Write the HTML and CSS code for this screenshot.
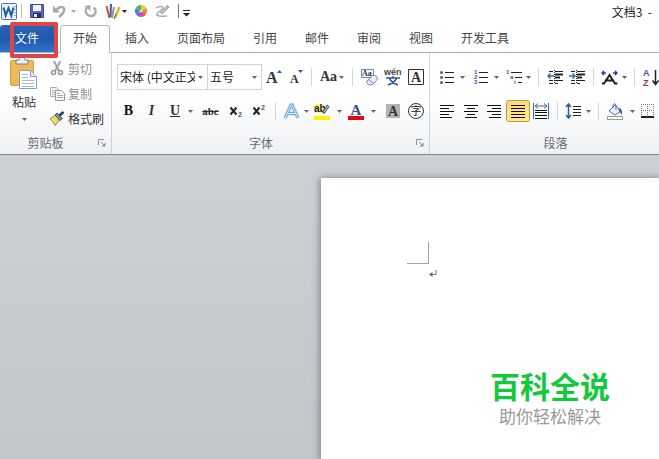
FILE: index.html
```html
<!DOCTYPE html>
<html lang="zh-CN">
<head>
<meta charset="utf-8">
<title>文档3</title>
<link rel="stylesheet" href="styles.css">
</head>
<body>
<svg class="defs" width="0" height="0" aria-hidden="true">
  <symbol id="caret" viewBox="0 0 5 3"><path d="M0 0h5L2.500 3z" fill="currentColor"/></symbol>
  <symbol id="launch" viewBox="0 0 8 8"><path d="M.5 6V.5H6" fill="none" stroke="#8b93a0"/><path d="M3 3l3 3" stroke="#8b93a0"/><path d="M7.500 3.500v4h-4z" fill="#8b93a0"/></symbol>
</svg>

<header class="titlebar">
  <div class="quick">
    <svg class="app" width="17" height="17" viewBox="0 0 17 17"><rect x=".5" y=".5" width="15" height="16" rx="1" fill="#e9f2fb" stroke="#4a78b4"/><path d="M13 3.500h2M13 6.500h2M13 9.500h2M13 12.500h2" stroke="#8eb0d8"/><path d="M2.500 4.500l2.200 8L7.500 5l2.800 7.500 2.200-8" fill="none" stroke="#1d57a5" stroke-width="2"/></svg>
    <i class="bar"></i>
    <button class="q save" aria-label="保存"><svg width="15" height="14" viewBox="0 0 15 14"><path d="M.5.5h13v13H.5z" fill="#5a66c4" stroke="#3d479f"/><path d="M3 1h8v6H3z" fill="#f3f6ff"/><path d="M3 9h8v5H3z" fill="#262d68"/><path d="M4 10h3v3H4z" fill="#e7eaff"/></svg></button>
    <button class="q undo" aria-label="撤消"><svg width="13" height="14" viewBox="0 0 13 14"><path d="M3 6C8 1 12 3 11 7q-1 3-5 6" fill="none" stroke="#a5a8ac" stroke-width="2.400"/><path d="M0 1.500V8.500h7z" fill="#a5a8ac"/></svg><svg class="caret pale"><use href="#caret"/></svg></button>
    <button class="q redo" aria-label="重复"><svg width="13" height="14" viewBox="0 0 13 14"><path d="M3 3.500c-3 4 0 8.500 4 8.500 5 0 6-6 2.500-8.500" fill="none" stroke="#aaacae" stroke-width="2.400"/><path d="M6.500 1v6l-6-5z" fill="#aaacae"/></svg></button>
    <button class="q pens" aria-label="笔"><svg width="16" height="17" viewBox="0 0 16 17"><path d="M1.500 3l3 12" stroke="#d64b39" stroke-width="2"/><path d="M6 1l-.5 13" stroke="#3f5f93" stroke-width="2"/><path d="M9 4l-2 11" stroke="#8b989d" stroke-width="2"/><path d="M14.500 4L10 15" stroke="#ddb932" stroke-width="2.500"/><path d="M11 11l-2 5" stroke="#796038"/></svg><svg class="caret"><use href="#caret"/></svg></button>
    <button class="q" aria-label="颜色"><svg width="12" height="12" viewBox="0 0 12 12"><path d="M6 6V0a6 6 0 0 1 5.200 3z" fill="#eacb2b"/><path d="M6 6l5.200-3a6 6 0 0 1 0 6z" fill="#ed8b38"/><path d="M6 6l5.200 3A6 6 0 0 1 6 12z" fill="#e64b81"/><path d="M6 6v6A6 6 0 0 1 .8 9z" fill="#995ad7"/><path d="M6 6L.8 9a6 6 0 0 1 0-6z" fill="#318bd8"/><path d="M6 6L.8 3A6 6 0 0 1 6 0z" fill="#43b75a"/><circle cx="6" cy="6" r="1.500" fill="#fff" opacity=".7"/></svg></button>
    <button class="q edit" aria-label="墨迹"><svg width="15" height="13" viewBox="0 0 15 13"><path d="M1 3c3-2 8-2 7 0S1 8 2 10s6 1 10 1" fill="none" stroke="#a6a9ab" stroke-width="1.500"/><path d="M13.500 1L6 8.500" stroke="#989b9e" stroke-width="3"/><path d="M13 1.500L6 8.500" stroke="#e6e6e6"/></svg></button>
    <i class="bar dark"></i>
    <button class="q more" aria-label="自定义快速访问工具栏"><svg width="7" height="7" viewBox="0 0 7 7"><path d="M0 .5h7" stroke="#222"/><path d="M0 3h7L3.500 6.500z" fill="#222"/></svg></button>
  </div>
  <h1>文档3&nbsp; -</h1>
</header>

<nav class="tabs">
  <a class="file" href="#file">文件</a>
  <a class="active" href="#home">开始</a>
  <a href="#insert">插入</a>
  <a href="#layout">页面布局</a>
  <a href="#ref">引用</a>
  <a href="#mail">邮件</a>
  <a href="#review">审阅</a>
  <a href="#view">视图</a>
  <a href="#dev">开发工具</a>
  <span class="highlight"></span>
</nav>

<section class="ribbon">
  <div class="group clipboard">
    <div class="clip-body">
      <button class="paste"><svg width="28" height="33" viewBox="0 0 28 33"><rect x=".5" y="3.500" width="23" height="25" rx="1.500" fill="#efb85a" stroke="#d69b3f"/><path d="M6 7V3h3c0-4 6-4 6 0h3v4z" fill="#eceff2" stroke="#777e88"/><path d="M9.500 13.500h11l6 6v12h-17z" fill="#fff" stroke="#7f9fc6"/><path d="M20.500 13.500v6h6" fill="#dce8f5" stroke="#7f9fc6"/><path d="M12 17.500h6M12 20.500h6M12 23.500h12M12 26.500h12M12 29.500h12" stroke="#a3bad6"/></svg><span>粘贴</span><svg class="caret"><use href="#caret"/></svg></button>
      <div class="clip-list">
        <button class="off"><svg width="15" height="15" viewBox="0 0 15 15"><path d="M4 0l5 10M10.500 0L5 10" stroke="#a2a5a8" stroke-width="2"/><circle cx="3.500" cy="11.500" r="2" fill="none" stroke="#929599" stroke-width="1.500"/><circle cx="10.500" cy="11.500" r="2" fill="none" stroke="#929599" stroke-width="1.500"/></svg>剪切</button>
        <button class="off"><svg width="15" height="15" viewBox="0 0 15 15"><path d="M.5 1.500h6l2 2v7h-8z" fill="#f1f1f1" stroke="#aaa"/><path d="M2 4.500h4M2 6.500h4M2 8.500h4" stroke="#bbb"/><path d="M5.500 4.500h6l3 3v7h-9z" fill="#f7f7f7" stroke="#999"/><path d="M7 7.500h3M7 9.500h6M7 11.500h6" stroke="#aaa"/></svg>复制</button>
        <button><svg width="15" height="15" viewBox="0 0 15 15"><path d="M0 8l5-4 5 5-5 5.500c-1-3-3-5-5-6.500z" fill="#f3d35d" stroke="#a98728"/><path d="M2 8l4 4" stroke="#fff0a8"/><path d="M5 4l2-2 5.500 5.500-2.500 2z" fill="#7d8cab" stroke="#4b5a7a"/><path d="M9.500 4.500L13.500 1" stroke="#263b68" stroke-width="2.500"/></svg>格式刷</button>
      </div>
    </div>
    <footer>剪贴板<svg class="launch"><use href="#launch"/></svg></footer>
  </div>

  <div class="group font">
    <div class="row">
      <label class="combo family"><select aria-label="字体"><option>宋体 (中文正文)</option></select><svg class="caret"><use href="#caret"/></svg></label>
      <label class="combo size"><select aria-label="字号"><option>五号</option></select><svg class="caret"><use href="#caret"/></svg></label>
      <button class="t w24" aria-label="增大字体"><svg width="16" height="16" viewBox="0 0 16 16"><text class="serif" x="0" y="14" font-size="16">A</text><path d="M11 4l2.500-3L16 4z" fill="#32599c"/></svg></button>
      <button class="t w20" aria-label="缩小字体"><svg width="14" height="16" viewBox="0 0 14 16"><text class="serif" x="1" y="14" font-size="12">A</text><path d="M9 1h5l-2.500 3z" fill="#32599c"/></svg></button>
      <i class="sep"></i>
      <button class="t w30 latin">Aa<svg class="caret"><use href="#caret"/></svg></button>
      <i class="sep"></i>
      <button class="t w23" aria-label="清除格式"><svg width="17" height="17" viewBox="0 0 17 17"><path d="M.5.5h12v8H.5z" fill="#f4f7fc" stroke="#7288ad"/><text class="serif" x="1" y="7" font-size="8">Aa</text><path d="M5.500 12.500l6-6q2-1 4 1t0 4l-4 4q-2 1-4 0t-2-3z" fill="#e8edf8" stroke="#7283aa"/><path d="M7.500 10.500l5 4" stroke="#7283aa"/></svg></button>
      <button class="t w23" aria-label="拼音指南"><svg width="18" height="18" viewBox="0 0 18 18"><text class="pin" x="0" y="7" font-size="9">wén</text><path d="M2 10h14M9 8v2M5 10q3 5 9 7M13 10q-3 5-9 7" fill="none" stroke="#2e57a5" stroke-width="1.500"/></svg></button>
      <button class="t w23" aria-label="字符边框"><svg width="16" height="16" viewBox="0 0 16 16"><path d="M.5.5h15v15H.5z" fill="#fff" stroke="#333"/><text class="serif" x="8" y="13" font-size="14" text-anchor="middle">A</text></svg></button>
    </div>
    <div class="row">
      <button class="t w23 serifb">B</button>
      <button class="t w23 serifi">I</button>
      <button class="t w34 serifu"><u>U</u><svg class="caret"><use href="#caret"/></svg></button>
      <button class="t w27 strike"><s>abc</s></button>
      <button class="t w23" aria-label="下标"><svg width="14" height="14" viewBox="0 0 14 14"><path d="M1.500 3.500l6 7M7.500 3.500l-6 7" stroke="#222" stroke-width="2"/><text class="digit" x="9" y="13">2</text></svg></button>
      <button class="t w23" aria-label="上标"><svg width="14" height="14" viewBox="0 0 14 14"><path d="M1.500 3.500l6 7M7.500 3.500l-6 7" stroke="#222" stroke-width="2"/><text class="digit" x="9" y="6">2</text></svg></button>
      <i class="sep"></i>
      <button class="t w30" aria-label="文本效果"><svg width="17" height="17" viewBox="0 0 17 17"><path d="M2 15L8 2h1l6 13M5 10.500h7" fill="none" stroke="#b5d8ee" stroke-width="4"/><path d="M2 15L8 2h1l6 13M5 10.500h7" fill="none" stroke="#5c9dcc" stroke-width="2.400"/><path d="M2 15L8 2h1l6 13M5 10.500h7" fill="none" stroke="#e9f5ff" stroke-width="1"/></svg><svg class="caret"><use href="#caret"/></svg></button>
      <button class="t w34" aria-label="突出显示"><svg width="17" height="17" viewBox="0 0 17 17"><path d="M0 1h10v9H0z" fill="#fff37b"/><text class="pin dark" x="0" y="9" font-size="10">ab</text><path d="M14.500 2.500L9 10" stroke="#485576" stroke-width="3"/><path d="M14.500 2.500L10 9" stroke="#dce3ef"/><path d="M0 13h16v4H0z" fill="#ffef00"/></svg><svg class="caret"><use href="#caret"/></svg></button>
      <button class="t w34" aria-label="字体颜色"><svg width="17" height="17" viewBox="0 0 17 17"><text class="serif blue" x="8" y="12" font-size="15" text-anchor="middle">A</text><path d="M0 13h16v4H0z" fill="#e30613"/></svg><svg class="caret"><use href="#caret"/></svg></button>
      <button class="t w27" aria-label="字符底纹"><svg width="14" height="14" viewBox="0 0 14 14"><path d="M0 0h14v14H0z" fill="#b3b3b3"/><text class="serif" x="7" y="12" font-size="14" text-anchor="middle">A</text></svg></button>
      <button class="t w20" aria-label="带圈字符"><svg width="16" height="16" viewBox="0 0 16 16"><circle cx="8" cy="8" r="7.500" fill="#fff" stroke="#333"/><text class="zi" x="8" y="12" text-anchor="middle">字</text></svg></button>
    </div>
    <footer>字体<svg class="launch"><use href="#launch"/></svg></footer>
  </div>

  <div class="group para">
    <div class="row">
      <button class="t w34" aria-label="项目符号"><svg width="14" height="14" viewBox="0 0 14 14"><path d="M5 2.500h9M5 7.500h9M5 12.500h9" stroke="#222"/><g fill="#4564a0"><circle cx="1.500" cy="2.500" r="1.500"/><circle cx="1.500" cy="7.500" r="1.500"/><circle cx="1.500" cy="12.500" r="1.500"/></g></svg><svg class="caret"><use href="#caret"/></svg></button>
      <button class="t w34" aria-label="编号"><svg width="14" height="16" viewBox="0 0 14 16"><path d="M5 3.500h9M5 8.500h9M5 13.500h9" stroke="#222"/><g class="num"><text x="0" y="5">1</text><text x="0" y="10">2</text><text x="0" y="15">3</text></g></svg><svg class="caret"><use href="#caret"/></svg></button>
      <button class="t w30" aria-label="多级列表"><svg width="16" height="16" viewBox="0 0 16 16"><path d="M5 3.500h11M9 8.500h7M12 13.500h4" stroke="#222"/><g class="num"><text x="0" y="5">1</text><text x="4" y="10">a</text><text x="8" y="15">i</text></g></svg><svg class="caret"><use href="#caret"/></svg></button>
      <i class="sep"></i>
      <button class="t w22" aria-label="减少缩进量"><svg width="16" height="14" viewBox="0 0 16 14"><path d="M2 1.500h4M8 1.500h8M8 10.500h8M2 10.500h4M2 13.500h4M8 13.500h3" stroke="#222"/><path d="M8 4.500h8M8 7.500h5" stroke="#222" stroke-width="2"/><path d="M7.500 0v14" stroke="#222" stroke-dasharray="1 1"/><path d="M1 6h6M3.500 3.500L1 6l2.500 2.500" fill="none" stroke="#3b66b1" stroke-width="1.500"/></svg></button>
      <button class="t w22" aria-label="增加缩进量"><svg width="16" height="14" viewBox="0 0 16 14"><path d="M2 1.500h4M8 1.500h8M8 10.500h8M2 10.500h4M2 13.500h4M8 13.500h3" stroke="#222"/><path d="M8 4.500h8M8 7.500h5" stroke="#222" stroke-width="2"/><path d="M7.500 0v14" stroke="#222" stroke-dasharray="1 1"/><path d="M0 6h6M3.500 3.500L6 6 3.500 8.500" fill="none" stroke="#3b66b1" stroke-width="1.500"/></svg></button>
      <i class="sep"></i>
      <button class="t w30" aria-label="中文版式"><svg width="17" height="15" viewBox="0 0 17 15"><path d="M1 13.500h2L8.500 5 14 13.500h2.500M4 10.500h9" fill="none" stroke="#222" stroke-width="2"/><path d="M1 3h4M3 1L1 3l2 2M12 3h4M14 1l2 2-2 2" fill="none" stroke="#303b91" stroke-width="1.500"/></svg><svg class="caret"><use href="#caret"/></svg></button>
      <i class="sep"></i>
      <button class="t w22" aria-label="排序"><svg width="17" height="19" viewBox="0 0 17 19"><text class="az" x="0" y="8">A</text><text class="az red" x="0" y="18">Z</text><path d="M12.500 2v14M9.500 12.500l3 4 3-4" fill="none" stroke="#222" stroke-width="1.500"/></svg></button>
    </div>
    <div class="row">
      <button class="t w24" aria-label="左对齐"><svg width="14" height="13" viewBox="0 0 14 13"><path d="M0 .5h14M0 3.500h9M0 6.500h14M0 9.500h9M0 12.500h12" stroke="#111"/></svg></button>
      <button class="t w23" aria-label="居中"><svg width="14" height="13" viewBox="0 0 14 13"><path d="M0 .5h14M3 3.500h8M0 6.500h14M3 9.500h8M1 12.500h12" stroke="#111"/></svg></button>
      <button class="t w24" aria-label="右对齐"><svg width="14" height="13" viewBox="0 0 14 13"><path d="M0 .5h14M5 3.500h9M0 6.500h14M5 9.500h9M2 12.500h12" stroke="#111"/></svg></button>
      <button class="t w24 on" aria-label="两端对齐"><svg width="14" height="13" viewBox="0 0 14 13"><path d="M0 .5h14M0 3.500h14M0 6.500h14M0 9.500h14M0 12.500h14" stroke="#111"/></svg></button>
      <button class="t w22" aria-label="分散对齐"><svg width="16" height="16" viewBox="0 0 16 16"><path d="M.5 0v16M15.500 0v16M2 3h12M5 .5L2 3l3 2.500M11 .5L14 3l-3 2.500" fill="none" stroke="#3b66b1"/><path d="M2 7.500h12M2 9.500h12M2 12.500h12M2 15.500h12" stroke="#111"/></svg></button>
      <i class="sep"></i>
      <button class="t w30" aria-label="行距"><svg width="17" height="16" viewBox="0 0 17 16"><path d="M3.500 1v14M1 4l2.500-3L6 4M1 12l2.500 3L6 12" fill="none" stroke="#32599c" stroke-width="1.500"/><path d="M8 3.500h8M8 6.500h8M8 9.500h8M8 12.500h8" stroke="#222"/></svg><svg class="caret"><use href="#caret"/></svg></button>
      <i class="sep"></i>
      <button class="t w34" aria-label="底纹"><svg width="17" height="17" viewBox="0 0 17 17"><path d="M2 8l6-6 6 6-6 4z" fill="#e9effa" stroke="#536c9b"/><path d="M6 5V2q1-3 3 0v5" fill="none" stroke="#536c9b"/><path d="M11 5q5 0 4 7l-3-4z" fill="#365f9e"/><path d="M.5 13.500h15v3H.5z" fill="#fff" stroke="#999"/></svg><svg class="caret"><use href="#caret"/></svg></button>
      <button class="t w20" aria-label="边框"><svg width="14" height="14" viewBox="0 0 14 14"><path d="M0 .5h13M0 6.500h13M.5 0v13M6.500 0v13M12.500 0v13" stroke="#777" stroke-dasharray="1 1"/><path d="M0 13h13" stroke="#222" stroke-width="2"/></svg></button>
    </div>
    <footer>段落</footer>
  </div>
</section>

<main class="workspace">
  <article class="page">
    <div class="corner"></div>
    <svg class="return" width="8" height="8" viewBox="0 0 8 8"><path d="M7 0v4.500H2" fill="none" stroke="#777"/><path d="M0 4.500L3.500 2v5z" fill="#666"/></svg>
    <aside class="brand"><strong>百科全说</strong><span>助你轻松解决</span></aside>
  </article>
</main>
</body>
</html>
```
FILE: styles.css
```css
* { box-sizing: border-box; }

body {
  margin: 0;
  min-height: 100vh;
  display: flex;
  flex-direction: column;
  overflow: hidden;
  background: #fff;
  color: #333;
  font: 12px/16px "Noto Sans CJK SC", sans-serif;
}

button {
  display: flex;
  align-items: center;
  justify-content: center;
  padding: 0;
  border: 0;
  background: none;
  color: inherit;
  font: inherit;
}

svg { flex: none; display: block; }
.defs { position: absolute; }
.caret { width: 5px; height: 3px; color: #666; }
.pale { color: #aaa; }

/* Title bar */
.titlebar {
  height: 25px;
  display: flex;
  justify-content: space-between;
  padding: 0 5px 0 1px;
}
.quick { display: flex; align-items: center; height: 22px; }
.bar { width: 1px; height: 14px; margin: 0 8px 0 3px; background: #bbb; }
.bar.dark { margin: 0 4px 0 8px; background: #777; }
.q { gap: 5px; margin-right: 8px; }
.pens { gap: 1px; }
.pens .caret { color: #222; }
.q.edit { margin-right: 0; }
.q.more { margin: 4px 0 0; }
h1 { margin: 4px 2px 0 0; font-size: 12px; line-height: 16px; font-weight: 400; color: #222; }

/* Tabs */
.tabs {
  position: relative;
  display: flex;
  height: 28px;
  border-bottom: 1px solid #b0b3b7;
}
.tabs a {
  padding: 5px 14px 0;
  color: #444;
  text-decoration: none;
  white-space: nowrap;
}
.tabs .file {
  width: 57px;
  margin-right: 3px;
  padding-left: 15px;
  border-radius: 3px 3px 0 0;
  background: linear-gradient(#2c64b5, #1f57ab 50%, #2f73cb);
  color: #fff;
}
.tabs .active {
  height: 28px;
  margin-right: 1px;
  padding: 4px 12px 0;
  border: 1px solid #b6babf;
  border-bottom: 0;
  border-radius: 3px 3px 0 0;
  background: #fff;
}
.highlight {
  position: absolute;
  z-index: 2;
  left: 10px;
  top: -3px;
  width: 48px;
  height: 36px;
  border: 4px solid #df4447;
  border-radius: 2px;
}

/* Ribbon */
.ribbon {
  display: flex;
  height: 102px;
  border-bottom: 1px solid #85898f;
  background: linear-gradient(#fff 45%, #eef0f3);
}
.group {
  display: flex;
  flex-direction: column;
  border-right: 1px solid #d0d3d8;
}
.group footer {
  position: relative;
  margin-top: auto;
  padding-bottom: 3px;
  text-align: center;
  color: #666c76;
}
.launch { position: absolute; right: 5px; bottom: 7px; width: 8px; height: 8px; }
.clipboard { flex: 0 0 112px; }
.clipboard footer { padding-right: 20px; }
.font { flex: 0 0 318px; padding-left: 5px; }
.font footer { padding-right: 24px; }
.para { flex: 1 0 229px; padding-left: 5px; border: 0; }
.para footer { padding-left: 14px; }

.clip-body { display: flex; gap: 10px; padding-left: 8px; }
.paste {
  width: 32px;
  flex-direction: column;
  justify-content: flex-start;
  padding-top: 4px;
}
.paste span { margin: 4px 0 8px; }
.clip-list { padding-top: 3px; }
.clip-list button { gap: 3px; height: 25px; }
.off { color: #8c8f93; }

.row { display: flex; align-items: center; height: 24px; margin-top: 12px; }
.row + .row { margin-top: 10px; }
.sep { flex: none; width: 1px; height: 18px; margin: 0 5px; background: #d3d5d8; }
.combo {
  display: flex;
  align-items: center;
  gap: 3px;
  height: 26px;
  padding: 0 4px 0 2px;
  border: 1px solid #d0d3d8;
  background: #fff;
}
.family { width: 91px; }
.size { width: 54px; border-left: 0; }
.combo select {
  appearance: none;
  flex: 1;
  width: 0;
  padding: 0;
  border: 0;
  background: none;
  color: #222;
  font: inherit;
}

.t { flex: none; height: 22px; gap: 4px; }
.w20 { width: 20px; }
.w22 { width: 22px; }
.w23 { width: 23px; }
.w24 { width: 24px; }
.w27 { width: 27px; }
.w30 { width: 30px; }
.w34 { width: 34px; gap: 6px; }
.on { border: 1px solid #c29a3b; border-radius: 3px; background: linear-gradient(#fbd978, #fee890); }
.latin { gap: 2px; font: bold 14px "Liberation Serif", serif; }
.serifb { font: bold 14px "Liberation Serif", serif; color: #111; }
.serifi { font: italic bold 14px "Liberation Serif", serif; }
.serifu { gap: 8px; padding-left: 3px; font: bold 14px "Liberation Serif", serif; }
.strike { font: bold 11px "Liberation Serif", serif; }
.serif { font-family: "Liberation Serif", serif; font-weight: bold; fill: #333; }
.blue { fill: #33518e; }
.pin { font-family: "Liberation Sans", sans-serif; font-weight: bold; fill: #444; }
.dark { fill: #222; }
.digit { font: bold 7px "Liberation Sans", sans-serif; fill: #32599c; }
.num { font: bold 6px "Liberation Sans", sans-serif; fill: #32599c; }
.zi { font: 11px "Noto Sans CJK SC", sans-serif; fill: #222; }
.az { font: bold 9px "Liberation Sans", sans-serif; fill: #3a5c9c; }
.az.red { fill: #9c3a42; }

/* Document */
.workspace {
  flex: 1;
  display: flex;
  padding: 23px 0 0 321px;
  background: linear-gradient(#cdd1d6, #c2c6ca);
}
.page {
  position: relative;
  flex: 1;
  padding: 64px 0 0 86px;
  background: #fff;
  box-shadow: 0 1px 7px 1px #777c82;
}
.corner { width: 22px; height: 22px; border: solid #a5a5a5; border-width: 0 1px 1px 0; }
.return { margin: 6px 0 0 22px; }
.brand {
  position: absolute;
  right: 49px;
  bottom: 30px;
  display: flex;
  flex-direction: column;
  align-items: center;
}
.brand strong { font-size: 30px; line-height: 36px; font-weight: 700; color: #12c83b; }
.brand span { font-size: 17px; line-height: 26px; color: #999; }
```
